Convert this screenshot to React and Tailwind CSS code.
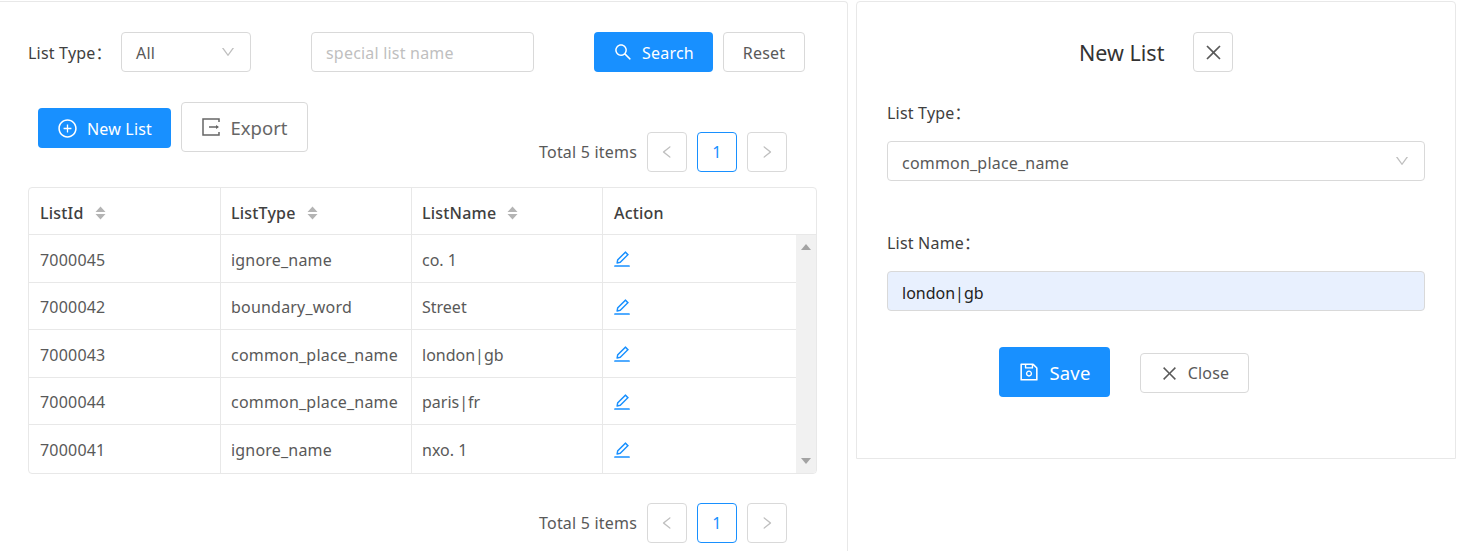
import React from "react";
import {
  AiOutlineClose,
  AiOutlineDown,
  AiOutlineEdit,
  AiOutlineLeft,
  AiOutlinePlusCircle,
  AiOutlineRight,
  AiOutlineSave,
  AiOutlineSearch,
} from "react-icons/ai";

const rows = [
  ["7000045", "ignore_name", "co. 1"],
  ["7000042", "boundary_word", "Street"],
  ["7000043", "common_place_name", "london|gb"],
  ["7000044", "common_place_name", "paris|fr"],
  ["7000041", "ignore_name", "nxo. 1"],
];

function SortIcon() {
  return (
    <svg width="11" height="14" viewBox="0 0 11 14" className="text-[#b4b4b4]">
      <path d="M5.5 0.5 L10.5 6 H0.5 Z M0.5 8 H10.5 L5.5 13.5 Z" fill="currentColor" />
    </svg>
  );
}

function ExportIcon() {
  return (
    <svg width="18" height="20" viewBox="0 0 18 20" fill="none" stroke="currentColor" strokeWidth="1.5">
      <path d="M17 5 V2 H1 V18 H17 V15" />
      <path d="M7 10 H16" />
      <path d="M14 8 L17 10 L14 12 Z" fill="currentColor" stroke="none" />
    </svg>
  );
}

function SortHead({ label, pad }) {
  return (
    <div className={`flex items-center gap-[11px] border-r border-[#e8e8e8] pt-[4px] font-medium text-[#404040] ${pad}`}>
      <span>{label}</span>
      <SortIcon />
    </div>
  );
}

function Pager({ className }) {
  return (
    <div className={`flex items-center justify-end ${className}`}>
      <span className="mr-[10px] text-[#595959]">Total 5 items</span>
      <div className="flex h-10 w-10 items-center justify-center rounded border border-[#d9d9d9] text-[#bfbfbf]">
        <AiOutlineLeft className="h-[16px] w-[16px]" />
      </div>
      <div className="ml-[10px] flex h-10 w-10 items-center justify-center rounded border border-[#1890ff] text-[#1890ff]">
        1
      </div>
      <div className="ml-[10px] flex h-10 w-10 items-center justify-center rounded border border-[#d9d9d9] text-[#bfbfbf]">
        <AiOutlineRight className="h-[16px] w-[16px]" />
      </div>
    </div>
  );
}

export default function App() {
  return (
    <div className="flex h-[551px] w-[1466px] items-start overflow-hidden bg-white font-['Noto_Sans','Noto_Sans_CJK_SC',sans-serif] text-[16px] leading-none tracking-[0.2px] text-[#595959]">
      {/* lista */}
      <div className="mt-px h-[560px] w-[848px] rounded-tr border-t border-r border-[#e8e8e8] pt-[30px] pl-[28px]">
        <div className="flex h-10 items-center">
          <span className="w-[93px] whitespace-nowrap pt-[2px] text-[#404040]">List Type：</span>
          <div className="flex h-10 w-[130px] items-center justify-between rounded border border-[#d9d9d9] px-[14px]">
            <span className="pt-[2px]">All</span>
            <AiOutlineDown className="h-[16px] w-[16px] text-[#bfbfbf]" />
          </div>
          <input
            className="ml-[60px] h-10 w-[223px] rounded border border-[#d9d9d9] px-[14px] pt-[2px] outline-none placeholder:text-[#bfbfbf]"
            placeholder="special list name"
          />
          <button className="ml-[60px] flex h-10 w-[119px] items-center justify-center gap-[9px] rounded bg-[#1890ff] text-white">
            <AiOutlineSearch className="h-[20px] w-[20px]" />
            <span className="pt-[2px]">Search</span>
          </button>
          <button className="ml-[10px] h-10 w-[82px] rounded border border-[#d9d9d9] pt-[2px]">Reset</button>
        </div>

        <div className="mt-[30px] flex h-[70px] items-start pl-[10px]">
          <button className="mt-[6px] flex h-10 w-[133px] items-center justify-center gap-[9px] rounded bg-[#1890ff] text-white">
            <AiOutlinePlusCircle className="h-[21px] w-[21px]" />
            <span className="pt-[2px]">New List</span>
          </button>
          <button className="ml-[10px] flex h-[50px] w-[127px] items-center justify-center gap-[11px] rounded border border-[#d9d9d9] text-[18.5px] tracking-normal text-[#666]">
            <ExportIcon />
            <span className="pt-[2px]">Export</span>
          </button>
          <Pager className="mt-[30px] mr-[60px] ml-auto" />
        </div>

        <div className="mt-[15px] w-[789px] overflow-hidden rounded border border-[#e8e8e8]">
          <div className="grid h-[47px] grid-cols-[192px_191px_191px_1fr] border-b border-[#e8e8e8]">
            <SortHead label="ListId" pad="pl-[11px]" />
            <SortHead label="ListType" pad="pl-[10px]" />
            <SortHead label="ListName" pad="pl-[10px]" />
            <div className="flex items-center pt-[4px] pl-[11px] font-medium text-[#404040]">Action</div>
          </div>
          <div className="flex">
            <div className="flex-1">
              {rows.map((r, i) => (
                <div
                  key={r[0]}
                  className={`grid h-[47.5px] grid-cols-[192px_191px_191px_1fr] ${i < 4 ? "border-b border-[#e8e8e8]" : ""}`}
                >
                  {r.map((c, j) => (
                    <div
                      key={c}
                      className={`flex items-center border-r border-[#e8e8e8] pt-[3px] ${j === 0 ? "pl-[11px]" : "pl-[10px]"} ${j === 2 ? "tracking-normal" : ""}`}
                    >
                      {c}
                    </div>
                  ))}
                  <div className="flex items-center pt-[2px] pl-[9px]">
                    <AiOutlineEdit className="h-[20px] w-[20px] text-[#1890ff]" />
                  </div>
                </div>
              ))}
            </div>
            <div className="flex w-[20px] flex-col justify-between bg-[#f1f1f1] pt-[9px] pb-[9px] text-[#a3a3a3]">
              <svg width="10" height="6" viewBox="0 0 10 6" className="mx-auto">
                <path d="M5 0 L10 6 H0 Z" fill="currentColor" />
              </svg>
              <svg width="10" height="6" viewBox="0 0 10 6" className="mx-auto">
                <path d="M0 0 H10 L5 6 Z" fill="currentColor" />
              </svg>
            </div>
          </div>
        </div>

        <Pager className="mt-[29px] mr-[60px]" />
      </div>

      {/* formularz */}
      <div className="mt-px ml-[8px] h-[458px] w-[600px] rounded-t border border-[#e8e8e8] px-[30px] pt-[30px]">
        <div className="flex h-10 items-center">
          <span className="ml-[192px] w-[84px] whitespace-nowrap pt-[2px] text-[21.5px] tracking-normal text-[#333]">New List</span>
          <button className="ml-[30px] flex h-10 w-10 items-center justify-center rounded border border-[#d9d9d9] text-[#595959]">
            <AiOutlineClose className="h-[21px] w-[21px]" />
          </button>
        </div>
        <div className="mt-[30px] flex h-[22px] items-center text-[#404040]">List Type：</div>
        <div className="mt-[17px] flex h-10 w-[538px] items-center justify-between rounded border border-[#d9d9d9] px-[14px]">
          <span className="pt-[4px]">common_place_name</span>
          <AiOutlineDown className="h-[16px] w-[16px] text-[#bfbfbf]" />
        </div>
        <div className="mt-[51px] flex h-[22px] items-center text-[#404040]">List Name：</div>
        <input
          readOnly
          value="london|gb"
          className="mt-[17px] h-10 w-[538px] rounded border border-[#d9d9d9] bg-[#e8f0fe] px-[14px] pt-[4px] tracking-normal text-[#222] outline-none"
        />
        <div className="mt-[36px] flex items-center pl-[112px]">
          <button className="flex h-[50px] w-[111px] items-center justify-center gap-[9px] rounded bg-[#1890ff] text-[18.5px] text-white">
            <AiOutlineSave className="h-[22px] w-[22px]" />
            <span className="pt-[2px]">Save</span>
          </button>
          <button className="mt-[2px] ml-[30px] flex h-10 w-[109px] items-center justify-center gap-[9px] rounded border border-[#d9d9d9]">
            <AiOutlineClose className="h-[19px] w-[19px]" />
            Close
          </button>
        </div>
      </div>
    </div>
  );
}
